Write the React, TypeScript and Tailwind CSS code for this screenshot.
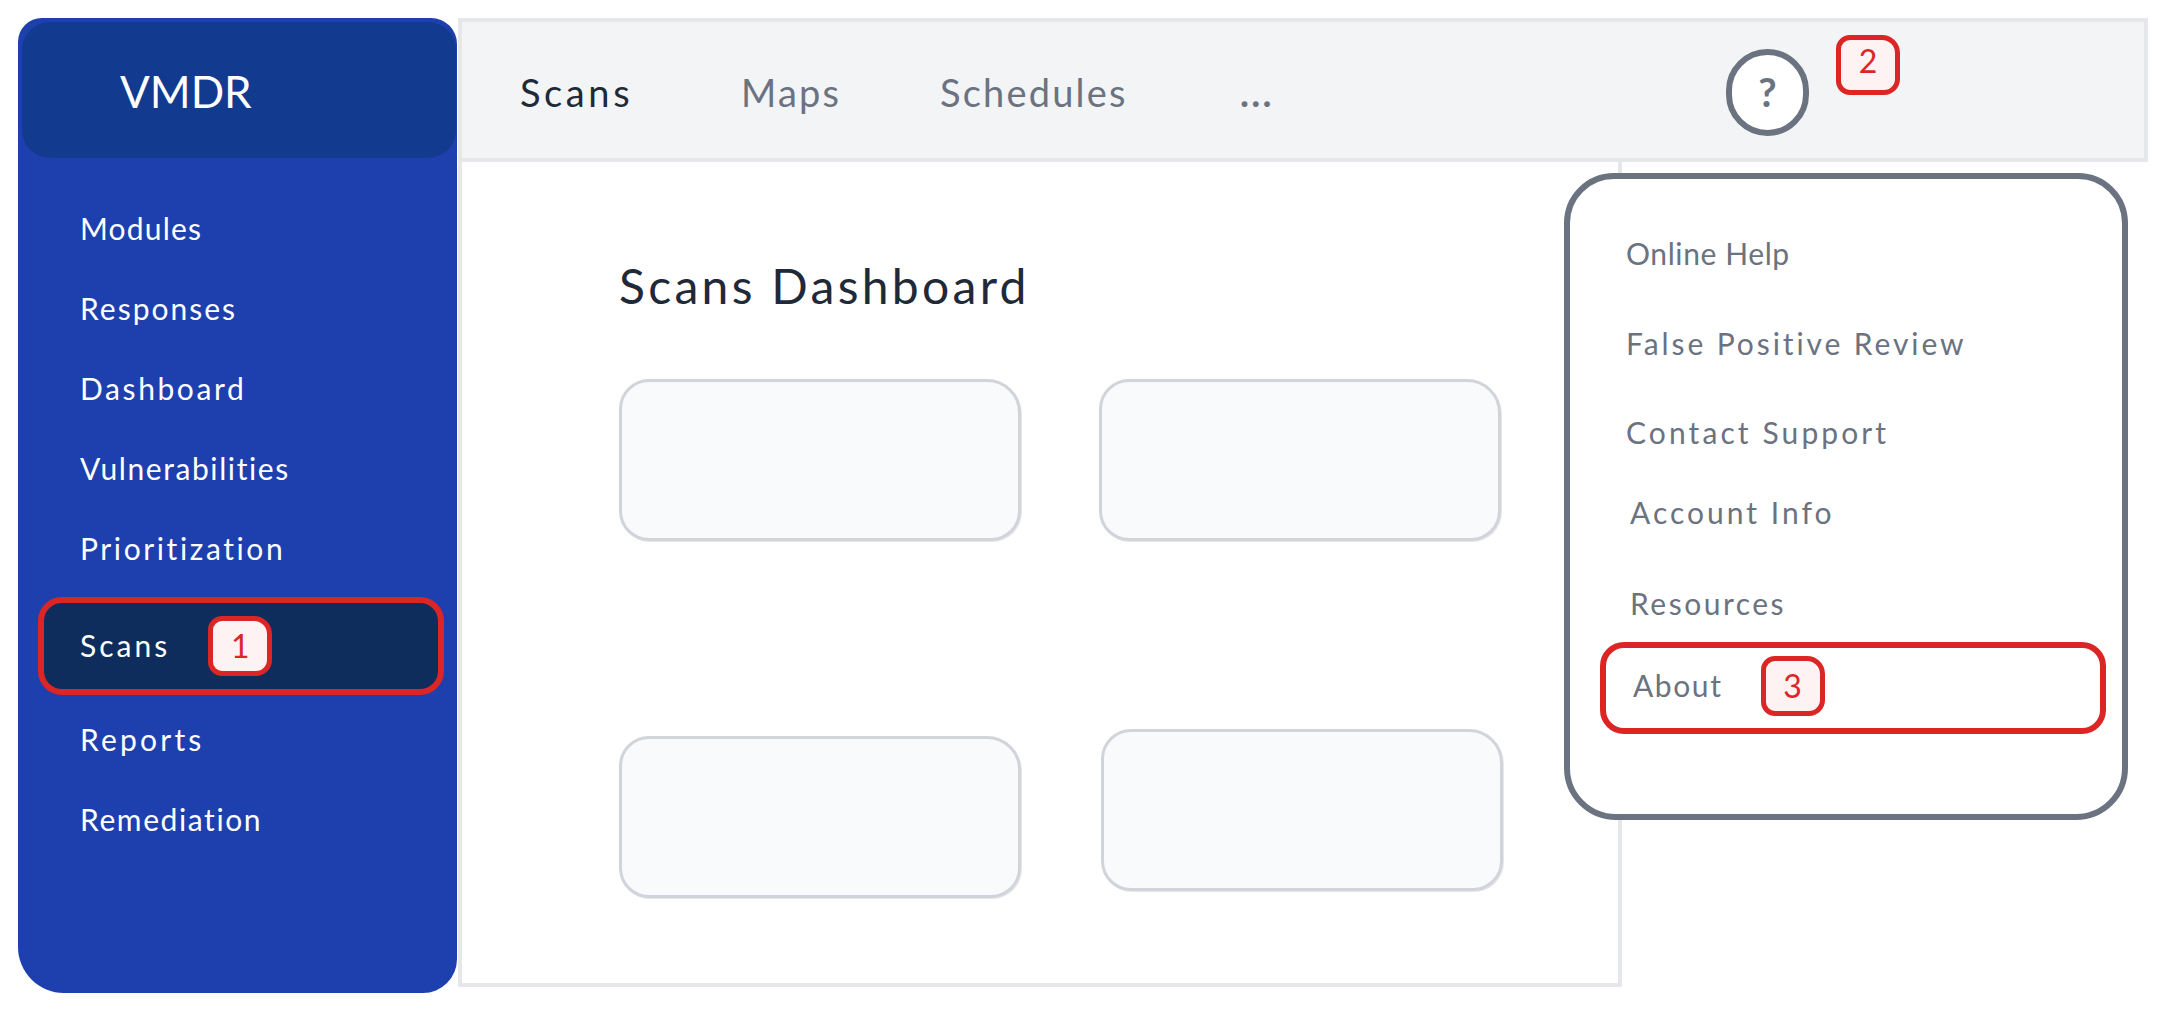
const sideItems = [
  { label: "Modules", cls: "tracking-[1.2px]" },
  { label: "Responses", cls: "tracking-[2px]" },
  { label: "Dashboard", cls: "tracking-[2.6px]" },
  { label: "Vulnerabilities", cls: "tracking-[1.6px]" },
  { label: "Prioritization", cls: "tracking-[2.6px]" },
];

const Badge = ({ n, className }: { n: string; className?: string }) => (
  <div
    className={`flex h-[60px] w-[64px] shrink-0 items-center justify-center rounded-[14px_18px_16px_14px] border-[5px] border-[#dc2626] bg-[#fef2f2] text-[32px] tracking-normal text-[#dc2626] ${className ?? ""}`}
  >
    {n}
  </div>
);

const Card = ({ className }: { className?: string }) => (
  <div
    className={`h-[162px] w-[402px] rounded-[30px_34px_30px_30px] border-[3px] border-[#d1d5db] bg-[#f9fafb] shadow-[1px_1px_0_#e5e7eb] ${className ?? ""}`}
  />
);

const SideLink = ({ label, className }: { label: string; className?: string }) => (
  <div className={`flex h-[80px] items-center pl-[62px] text-[30px] text-white ${className ?? ""}`}>{label}</div>
);

const Sidebar = () => (
  <aside className="flex h-[975px] w-[439px] shrink-0 flex-col rounded-[24px_26px_34px_46px] bg-[#1e40af]">
    <div className="mt-[4px] ml-[4px] flex h-[136px] w-[434px] items-center rounded-[28px] bg-[#123a8f] pl-[98px] pt-[2px] text-[44px] text-white">
      VMDR
    </div>
    <nav className="mt-[30px] flex flex-col">
      {sideItems.map((item) => (
        <SideLink key={item.label} label={item.label} className={item.cls} />
      ))}
      <div className="mt-[9px] ml-[20px] flex h-[98px] w-[406px] items-center gap-[38px] rounded-[24px] border-[6px] border-[#dc2626] bg-[#0f2d5c] pl-[36px] text-[30px] tracking-[3px] text-white">
        <span className="pb-[2px]">Scans</span>
        <Badge n="1" />
      </div>
      <div className="mt-[4px]">
        <SideLink label="Reports" className="tracking-[3.2px]" />
        <SideLink label="Remediation" className="tracking-[1.6px]" />
      </div>
    </nav>
  </aside>
);

const TopBar = () => (
  <header className="flex h-[144px] w-[1690px] items-center border-[4px] border-[#e5e7eb] bg-[#f3f4f6] pl-[58px] text-[38px] tracking-[2.2px] text-[#6b7280]">
    <div className="mt-[4px] w-[221px] tracking-[3.6px] text-[#1f2937]">Scans</div>
    <div className="mt-[4px] w-[199px]">Maps</div>
    <div className="mt-[4px] w-[300px]">Schedules</div>
    <div className="mt-[4px] w-[486px] font-bold">...</div>
    <div className="mt-[4px] flex h-[87px] w-[83px] items-center justify-center rounded-full border-[6px] border-[#6b7280] bg-white text-[40px] font-bold tracking-normal">
      ?
    </div>
    <Badge n="2" className="mb-[50px] ml-[27px] pb-[8px]" />
  </header>
);

const menu = [
  { label: "Online Help", cls: "mt-[39px] tracking-[0.6px]" },
  { label: "False Positive Review", cls: "mt-[20px] tracking-[2.9px]" },
  { label: "Contact Support", cls: "mt-[19px] tracking-[3.1px]" },
  { label: "Account Info", cls: "mt-[10px] ml-[4px] tracking-[3px]" },
  { label: "Resources", cls: "mt-[21px] ml-[4px] tracking-[2.5px]" },
];

const HelpMenu = () => (
  <div className="absolute left-[1106px] top-[155px] h-[647px] w-[564px] rounded-[50px_50px_52px_52px] border-[6px] border-[#6b7280] bg-white text-[30px] text-[#6b7280]">
    <div className="flex flex-col pl-[56px]">
      {menu.map((m) => (
        <div key={m.label} className={`flex h-[70px] items-center ${m.cls}`}>
          {m.label}
        </div>
      ))}
    </div>
    <div className="mt-[4px] ml-[30px] flex h-[92px] w-[506px] items-center gap-[38px] rounded-[24px] border-[6px] border-[#dc2626] pl-[27px] tracking-[1.6px]">
      <span className="pb-[6px]">About</span>
      <Badge n="3" className="mb-[4px]" />
    </div>
  </div>
);

const Main = () => (
  <main className="h-[825px] w-[1164px] border-[4px] border-t-0 border-[#e5e7eb] bg-white pt-[94px] pl-[157px]">
    <h1 className="flex h-[60px] items-center text-[48px] tracking-[3.3px] text-[#1f2937]">Scans Dashboard</h1>
    <div className="mt-[63px] flex gap-[78px]">
      <Card />
      <Card />
    </div>
    <div className="mt-[188px] flex items-start gap-[80px]">
      <Card className="mt-[7px]" />
      <Card />
    </div>
  </main>
);

export default function App() {
  return (
    <div className="flex h-[1009px] w-[2166px] overflow-hidden bg-white pt-[18px] pl-[18px] font-['Lato',sans-serif]">
      <Sidebar />
      <div className="relative ml-[1px]">
        <TopBar />
        <Main />
        <HelpMenu />
      </div>
    </div>
  );
}
